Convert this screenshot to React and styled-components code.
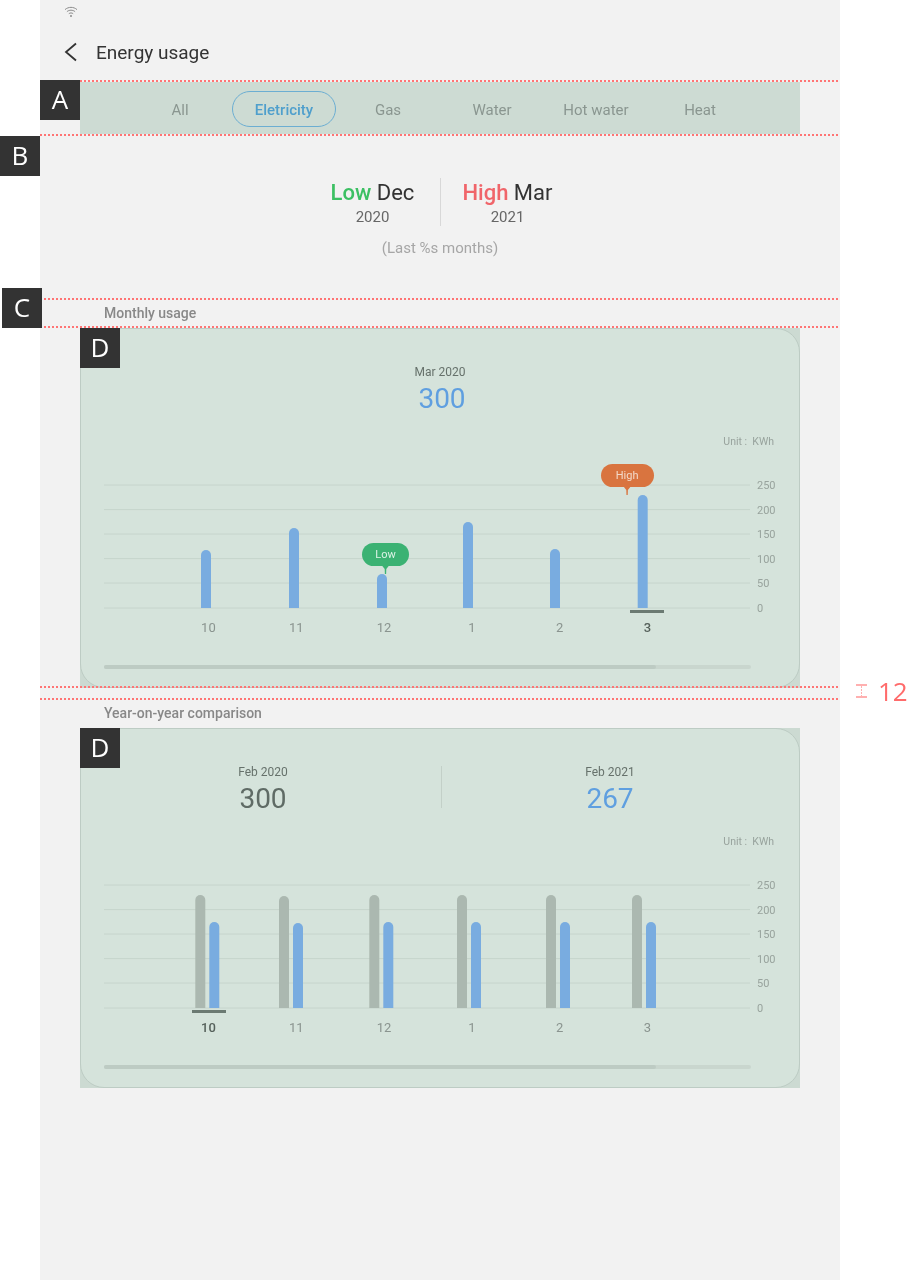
import styled, { createGlobalStyle } from "styled-components";

const GlobalStyle = createGlobalStyle`
html, body {
  margin: 0;
  padding: 0;
  background: #fff;
}
* {
  box-sizing: border-box;
}
`

const Page = styled.div`
position: relative;
width: 920px;
height: 1280px;
overflow: hidden;
font-family: Roboto, "Liberation Sans", sans-serif;
will-change: transform;
`

const Screen = styled.main`
width: 800px;
height: 1280px;
margin-left: 40px;
background: #f2f2f2;
`

const StatusBar = styled.div`
height: 24px;
padding: 6px 0 0 24px;
`

const AppBar = styled.header`
display: flex;
align-items: center;
gap: 17px;
height: 56px;
padding-left: 23px;
`

const Title = styled.h1`
margin: 0;
font-size: 19px;
font-weight: 400;
color: #333;
`

const Guide = styled.div`
position: relative;
width: 798px;
height: 2px;
margin-top: ${p => p.$overlap ? "-2px" : p.$gap || "0"};
background: repeating-linear-gradient(90deg, #ff7474 0 2px, transparent 2px 4px);
`

const Tabs = styled.nav`
display: grid;
grid-template-columns: repeat(6, 104px);
align-items: center;
justify-content: center;
height: 52px;
margin: 0 40px;
padding-top: 2px;
background: #cddbd3;
`

const Tab = styled.div`
height: 36px;
line-height: 36px;
text-align: center;
font-size: 15px;
font-weight: ${p => p.$active ? 500 : 400};
color: ${p => p.$active ? "#4f9fcc" : "#8a9690"};
border: 1px solid ${p => p.$active ? "#6caed2" : "transparent"};
border-radius: 18px;
`

const Overview = styled.section`
height: 162px;
padding-top: 42px;
text-align: center;
`

const Extremes = styled.div`
display: flex;
justify-content: center;
`

const Extreme = styled.div`
width: 134px;
`

const ExtremeRule = styled.div`
width: 1px;
height: 48px;
background: #d8d8d8;
`

const ExtremeTitle = styled.div`
height: 28px;
line-height: 30px;
font-size: 22px;
color: #333;
`

const Level = styled.span`
font-weight: 500;
color: ${p => p.$high ? "#f0656a" : "#3cc063"};
`

const ExtremeYear = styled.div`
margin-top: 1px;
line-height: 20px;
font-size: 15px;
color: #666;
`

const Period = styled.div`
margin-top: 11px;
line-height: 20px;
font-size: 15px;
color: #a6a6a6;
`

const Heading = styled.h2`
height: ${p => p.$tall ? "28px" : "26px"};
margin: 0;
padding-left: 64px;
line-height: 26px;
font-size: 14px;
font-weight: 500;
color: #888;
`

const Slot = styled.section`
width: 720px;
height: 360px;
margin-left: 40px;
background: #ccdad2;
`

const Card = styled.div`
height: 100%;
padding-top: 35px;
background: #d5e3db;
border: 1px solid #bdccc4;
border-radius: 24px;
`

const Summary = styled.div`
display: grid;
grid-template-columns: ${p => p.$split ? "356px 1px 336px" : "1fr"};
height: 52px;
margin-left: ${p => p.$split ? "4px" : "0"};
text-align: center;
`

const SummaryRule = styled.div`
height: 42px;
margin-top: 2px;
background: #c3d0c8;
`

const SummaryLabel = styled.div`
line-height: 16px;
font-size: 12px;
color: #66716b;
`

const SummaryValue = styled.div`
padding-left: ${p => p.$shift || 0}px;
line-height: 38px;
font-size: 28px;
color: ${p => p.$muted ? "#5f6b65" : "#5f9fe0"};
`

const Unit = styled.div`
margin: 18px 25px 0 0;
line-height: 16px;
text-align: right;
font-size: 10.5px;
color: #98a39d;
white-space: pre;
`

const Chart = styled.div`
position: relative;
display: flex;
margin: 22px 0 0 23px;
`

const Plot = styled.svg`
display: block;
flex: none;
`

const YAxis = styled.div`
margin-left: 7px;
padding-top: 2px;
`

const YTick = styled.div`
height: 24.6px;
line-height: 24.6px;
font-size: 11px;
color: #98a39d;
`

const Marker = styled.div`
position: absolute;
left: ${p => p.$left}px;
top: ${p => p.$top}px;
width: ${p => p.$width}px;
height: 23px;
line-height: 23px;
text-align: center;
font-size: 11px;
color: ${p => p.$high ? "#f3d9c8" : "#dcf3e6"};
background: ${p => p.$high ? "#d9743f" : "#3bb273"};
border-radius: 12px;
&::after {
  content: "";
  position: absolute;
  left: 50%;
  top: 22px;
  width: 8px;
  height: 9px;
  transform: translateX(-50%);
  background: inherit;
  clip-path: polygon(0 0, 100% 0, 60% 45%, 58% 100%, 42% 100%, 40% 45%);
}
`

const XAxis = styled.div`
display: flex;
margin: -2px 0 0 83.500px;
`

const XTick = styled.div`
flex: 0 0 87.8px;
line-height: 16px;
text-align: center;
font-size: 13px;
font-weight: ${p => p.$active ? 500 : 400};
color: ${p => p.$active ? "#56615b" : "#8a948f"};
`

const ScrollTrack = styled.div`
width: 647px;
height: 4px;
margin: 29px 0 0 23px;
background: #c9d6ce;
border-radius: 2px;
`

const ScrollThumb = styled.div`
width: 552px;
height: 4px;
background: #bdcbc3;
border-radius: 2px;
`

const Tag = styled.div`
position: absolute;
left: ${p => p.$x}px;
top: ${p => p.$y}px;
width: 40px;
height: 40px;
line-height: 38px;
text-align: center;
font-family: "Open Sans", "Noto Sans", sans-serif;
font-size: 26px;
font-weight: 400;
color: #fff;
background: #333;
`

const SpacingNote = styled.div`
position: absolute;
left: 855px;
top: 673px;
display: flex;
align-items: center;
gap: 10px;
font-family: "Open Sans", "Noto Sans", sans-serif;
font-size: 26px;
font-weight: 400;
line-height: 36px;
color: #ff6b6b;
`

const WifiIcon = styled(({ className }) => (
    <svg className={className} width="14" height="12" viewBox="0 0 14 12" fill="none" stroke="#8c8c8c" strokeWidth="1">
        <path d="M1 3.6C4.4 .6 9.6 .6 13 3.6" />
        <path d="M2.9 5.7C5.2 3.7 8.8 3.7 11.1 5.7" />
        <path d="M4.8 7.7C6.1 6.7 7.9 6.7 9.2 7.7" />
        <circle cx="7" cy="10" r="1" fill="#8c8c8c" stroke="none" />
    </svg>
))`
display: block;
`

const BackIcon = () => (
    <svg width="16" height="20" viewBox="0 0 16 20" fill="none" stroke="#333" strokeWidth="1.8">
        <path d="M13 1.500L3 10l10 8.500" />
    </svg>
)

const SpacingIcon = () => (
    <svg width="13" height="16" viewBox="0 0 13 16" fill="none" stroke="#ffb0b0" strokeWidth="2">
        <path d="M1 2H12M1 14H12" />
        <path d="M6.500 3V13" strokeWidth="1" strokeDasharray="2 1" />
    </svg>
)

const TABS = ["All", "Eletricity", "Gas", "Water", "Hot water", "Heat"]
const MONTHS = [10, 11, 12, 1, 2, 3]
const Y_TICKS = [250, 200, 150, 100, 50, 0]
const GRID_LINES = [13, 37.6, 62, 86.6, 111, 136]
const BAR_COLOR = "#79ace0"
const PAST_COLOR = "#abb8b0"

const MONTHLY_BARS = [
    { x: 97, top: 78 },
    { x: 185, top: 56 },
    { x: 273, top: 102 },
    { x: 359, top: 50 },
    { x: 446, top: 77 },
    { x: 533.7, top: 23 },
].map(bar => ({ ...bar, color: BAR_COLOR }))

const YEARLY_BARS = [
    { x: 91.3, past: 23, now: 50 },
    { x: 175, past: 24, now: 51 },
    { x: 265.3, past: 23, now: 50 },
    { x: 353, past: 23, now: 50 },
    { x: 442, past: 23, now: 50 },
    { x: 528, past: 23, now: 50 },
].flatMap(({ x, past, now }) => [
    { x, top: past, color: PAST_COLOR },
    { x: x + 14, top: now, color: BAR_COLOR },
])

const BarChart = ({ bars, selected, activeMonth, children }) => {
    return (
        <>
            <Chart>
                <Plot width="646" height="144" viewBox="0 0 646 144">
                    {GRID_LINES.map(y => (
                        <line key={y} x1="0" x2="646" y1={y} y2={y} stroke="#c6d4cc" strokeWidth="1" />
                    ))}
                    {bars.map((bar, idx) => (
                        <path
                            key={idx}
                            d={`M${bar.x} ${bar.top + 5}a5 5 0 0 1 10 0V136H${bar.x}Z`}
                            fill={bar.color}
                        />
                    ))}
                    <rect x={selected} y="138" width="34" height="3" fill="#6b7a72" />
                </Plot>
                <YAxis>
                    {Y_TICKS.map(tick => <YTick key={tick}>{tick}</YTick>)}
                </YAxis>
                {children}
            </Chart>
            <XAxis>
                {MONTHS.map(month => (
                    <XTick key={month} $active={month === activeMonth}>{month}</XTick>
                ))}
            </XAxis>
            <ScrollTrack>
                <ScrollThumb />
            </ScrollTrack>
        </>
    )
}

const App = () => {
    return (
        <Page>
            <GlobalStyle />
            <Screen>
                <StatusBar>
                    <WifiIcon />
                </StatusBar>
                <AppBar>
                    <BackIcon />
                    <Title>Energy usage</Title>
                </AppBar>
                <Guide />
                <Tabs>
                    {TABS.map(tab => (
                        <Tab key={tab} $active={tab === "Eletricity"}>{tab}</Tab>
                    ))}
                </Tabs>
                <Guide />
                <Overview>
                    <Extremes>
                        <Extreme>
                            <ExtremeTitle><Level>Low</Level> Dec</ExtremeTitle>
                            <ExtremeYear>2020</ExtremeYear>
                        </Extreme>
                        <ExtremeRule />
                        <Extreme>
                            <ExtremeTitle><Level $high>High</Level> Mar</ExtremeTitle>
                            <ExtremeYear>2021</ExtremeYear>
                        </Extreme>
                    </Extremes>
                    <Period>(Last %s months)</Period>
                </Overview>
                <Guide />
                <Heading>Monthly usage</Heading>
                <Guide />
                <Slot>
                    <Card>
                        <Summary>
                            <div>
                                <SummaryLabel>Mar 2020</SummaryLabel>
                                <SummaryValue $shift={4}>300</SummaryValue>
                            </div>
                        </Summary>
                        <Unit>Unit :  KWh</Unit>
                        <BarChart bars={MONTHLY_BARS} selected={526} activeMonth={3}>
                            <Marker $left={258} $top={71} $width={47}>Low</Marker>
                            <Marker $left={496.600} $top={-8} $width={53} $high>High</Marker>
                        </BarChart>
                    </Card>
                </Slot>
                <Guide $overlap />
                <Guide $gap="10px" />
                <Heading $tall>Year-on-year comparison</Heading>
                <Slot>
                    <Card>
                        <Summary $split>
                            <div>
                                <SummaryLabel>Feb 2020</SummaryLabel>
                                <SummaryValue $muted>300</SummaryValue>
                            </div>
                            <SummaryRule />
                            <div>
                                <SummaryLabel>Feb 2021</SummaryLabel>
                                <SummaryValue>267</SummaryValue>
                            </div>
                        </Summary>
                        <Unit>Unit :  KWh</Unit>
                        <BarChart bars={YEARLY_BARS} selected={88} activeMonth={10} />
                    </Card>
                </Slot>
            </Screen>
            <Tag $x={40} $y={80}>A</Tag>
            <Tag $x={0} $y={136}>B</Tag>
            <Tag $x={2} $y={288}>C</Tag>
            <Tag $x={80} $y={328}>D</Tag>
            <Tag $x={80} $y={728}>D</Tag>
            <SpacingNote>
                <SpacingIcon />
                12
            </SpacingNote>
        </Page>
    )
}

export default App;
